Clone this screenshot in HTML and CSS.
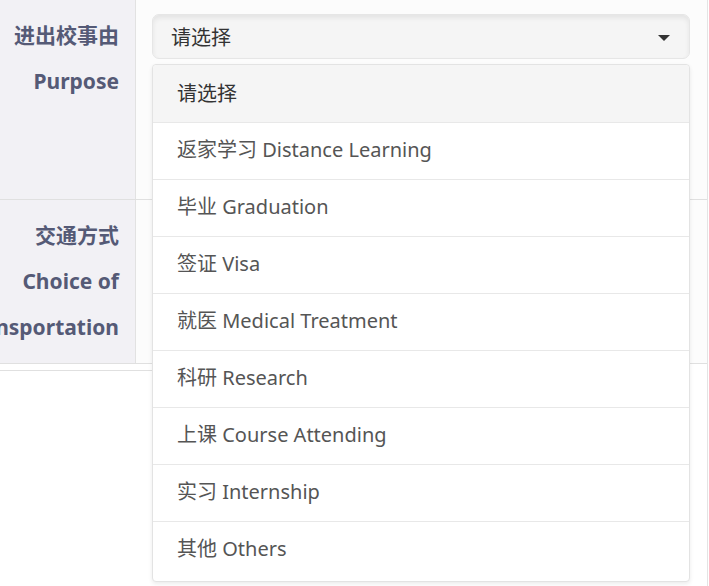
FILE: index.html
```html
<!DOCTYPE html>
<html lang="zh-CN">
<head>
<meta charset="utf-8">
<title>进出校申请</title>
<link rel="stylesheet" href="styles.css">
</head>
<body>
<div class="form">
  <div class="row row-purpose">
    <div class="label">
      <span class="line">进出校事由</span>
      <span class="line">Purpose</span>
    </div>
    <div class="field">
      <div class="select">
        <div class="select-box">
          <span class="select-value">请选择</span>
          <svg class="caret" width="12" height="6" viewBox="0 0 12 6"><polygon points="0,0 12,0 6,6" fill="#333"/></svg>
        </div>
        <ul class="menu">
          <li class="option active">请选择</li>
          <li class="option">返家学习 Distance Learning</li>
          <li class="option">毕业 Graduation</li>
          <li class="option">签证 Visa</li>
          <li class="option">就医 Medical Treatment</li>
          <li class="option">科研 Research</li>
          <li class="option">上课 Course Attending</li>
          <li class="option">实习 Internship</li>
          <li class="option">其他 Others</li>
        </ul>
      </div>
    </div>
  </div>
  <div class="row row-transport">
    <div class="label">
      <span class="line">交通方式</span>
      <span class="line">Choice of</span>
      <span class="line">Transportation</span>
    </div>
    <div class="field"></div>
  </div>
  <div class="next-row"></div>
</div>
</body>
</html>
```

FILE: styles.css
```css
html, body {
  margin: 0;
  padding: 0;
  background: #ffffff;
}

body {
  font-family: "Noto Sans", "Noto Sans CJK SC", sans-serif;
  overflow: hidden;
}

.form {
  width: 707px;
  min-height: 586px;
  border-right: 1px solid #e4e4e4;
}

.row {
  display: grid;
  grid-template-columns: 136px 1fr;
  border-bottom: 1px solid #e0e0e0;
}

.row-purpose {
  height: 199px;
}

.row-transport {
  height: 163px;
}

.label {
  background: #f2f1f5;
  border-right: 1px solid #e2e2e2;
  padding: 12px 16px 0 0;
  overflow: hidden;
  display: flex;
  flex-direction: column;
}

.line {
  display: flex;
  justify-content: flex-end;
  white-space: nowrap;
  height: 46px;
  line-height: 46px;
  font-size: 21px;
  font-weight: 700;
  color: #555a76;
}

.field {
  background: #fcfcfc;
  padding: 14px 0 0 16px;
}

.select {
  position: relative;
  width: 538px;
}

.select-box {
  height: 45px;
  box-sizing: border-box;
  border: 1px solid #e6e6e6;
  border-radius: 7px;
  background: #f5f5f5;
  box-shadow: inset 0 3px 5px rgba(0, 0, 0, 0.07);
  display: flex;
  align-items: center;
  justify-content: space-between;
  padding: 2px 19px 0 18px;
  font-size: 20px;
  color: #333333;
}

.select-value {
  line-height: 1;
}

.caret {
  display: block;
}

.menu {
  position: absolute;
  top: 50px;
  left: 0;
  width: 538px;
  box-sizing: border-box;
  margin: 0;
  padding: 0 0 3px;
  list-style: none;
  background: #ffffff;
  border: 1px solid #e3e3e3;
  border-radius: 4px;
  box-shadow: 0 2px 4px rgba(0, 0, 0, 0.08);
}

.option {
  height: 57px;
  box-sizing: border-box;
  display: flex;
  align-items: center;
  padding: 0 0 6px 24px;
  border-top: 1px solid #e8e8e8;
  font-size: 20px;
  color: #555555;
  white-space: nowrap;
}

.option.active {
  height: 57px;
  padding-bottom: 2px;
  border-top: none;
  background: #f5f5f5;
  color: #333333;
  border-radius: 4px 4px 0 0;
}

.next-row {
  height: 6px;
  width: 690px;
  border-bottom: 1px solid #e0e0e0;
}
```
